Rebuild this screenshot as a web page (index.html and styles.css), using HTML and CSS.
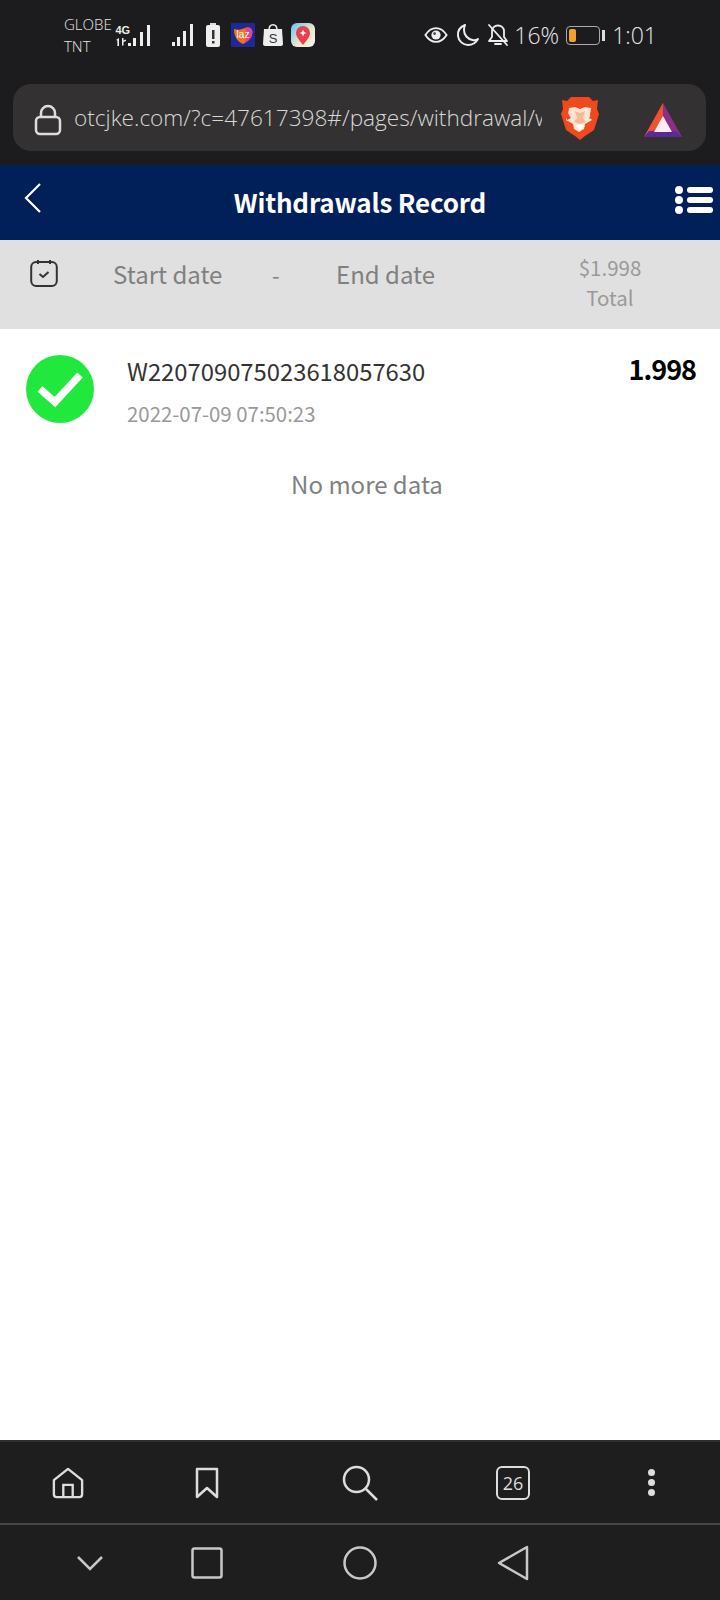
FILE: index.html
```html
<!DOCTYPE html>
<html lang="en">
<head>
    <meta charset="UTF-8">
    <meta name="viewport" content="width=device-width, initial-scale=1.0">
    <title>Withdrawals Record</title>
    <link rel="stylesheet" href="styles.css">
</head>
<body>
    <div class="chrome">
        <div class="status-bar">
            <div class="status-left">
                <div class="carrier">GLOBE<br>TNT</div>
                <svg width="36" height="24" viewBox="0 0 36 24">
                    <g fill="#eee">
                        <rect x="13" y="20" width="3" height="3"/>
                        <rect x="18" y="15" width="3" height="8"/>
                        <rect x="25" y="9" width="3" height="14"/>
                        <rect x="32" y="2" width="3" height="21"/>
                        <path d="M1 17l3-2v8H2.400v-5.500zM7 15h1.500v2.500l2.500-1v1.500l-2.500 1v3.500H7z"/>
                    </g>
                    <text x="0.500" y="11" class="net">4G</text>
                </svg>
                <svg class="ic-sig2" width="24" height="24" viewBox="0 0 24 24">
                    <g fill="#eee">
                        <rect x="1" y="19" width="3" height="4"/>
                        <rect x="6" y="14" width="3" height="9"/>
                        <rect x="12" y="8" width="3" height="15"/>
                        <rect x="19" y="1" width="3" height="22"/>
                    </g>
                </svg>
                <svg class="ic-batt" width="14" height="24" viewBox="0 0 14 24">
                    <rect x="4" y="0" width="6" height="3" fill="#ddd"/>
                    <rect x="0" y="2" width="14" height="22" rx="2" fill="#eee"/>
                    <rect x="6" y="7" width="2.500" height="9" fill="#333"/>
                    <rect x="6" y="18" width="2.500" height="2.500" fill="#333"/>
                </svg>
                <svg class="ic-laz" width="24" height="24" viewBox="0 0 24 24">
                    <rect width="24" height="24" fill="#1b2a94"/>
                    <path d="M3 6c3 1 6 1 8 0 3-1 6-2 8-1 2 1 3 3 2 7-1 4-5 7-9 9-5-2-9-7-9-15z" fill="#f5731f"/>
                    <path d="M14 5c2-.6 4-.6 5 0 2 1 3 3 2 7-1 4-5 7-9 9 3-3 5-8 2-16z" fill="#e8418e"/>
                    <text x="12" y="15" class="laz">laz</text>
                </svg>
                <svg class="ic-shop" width="20" height="22" viewBox="0 0 20 22">
                    <path d="M6 6c0-7 8-7 8 0" fill="none" stroke="#eee" stroke-width="1.500"/>
                    <path d="M1 5h18l1 15c0 1-1 2-2 2H2c-1 0-2-1-2-2z" fill="#eee"/>
                    <text x="10" y="19" class="shop">S</text>
                </svg>
                <svg class="ic-maps" width="24" height="24" viewBox="0 0 24 24">
                    <defs>
                        <linearGradient id="mapbg" x1="0" y1="0" x2="1" y2="1">
                            <stop offset="0" stop-color="#5cc6f2"/>
                            <stop offset="0.6" stop-color="#f3e9c8"/>
                            <stop offset="1" stop-color="#f4f4f4"/>
                        </linearGradient>
                    </defs>
                    <rect width="24" height="24" rx="6" fill="url(#mapbg)"/>
                    <path d="M12 22c-3-4-7-8-7-12a7 7 0 0 1 14 0c0 4-4 8-7 12z" fill="#e8404f"/>
                    <path d="M12 6.500l1 2.500 2.500 1-2.500 1-1 2.500-1-2.500-2.500-1 2.500-1z" fill="#fff"/>
                </svg>
            </div>
            <div class="status-right">
                <svg width="24" height="20" viewBox="0 0 26 20">
                    <path d="M1.500 10C5 4.500 9 2.500 13 2.500S21 4.500 24.500 10C21 15.500 17 17.500 13 17.500S5 15.500 1.500 10z" fill="none" stroke="#eee" stroke-width="2"/>
                    <circle cx="13" cy="10" r="5" fill="#eee"/>
                    <circle cx="11.500" cy="8.500" r="1.500" fill="#444"/>
                </svg>
                <svg class="ic-moon" width="24" height="24" viewBox="0 0 24 24">
                    <path d="M9 2C4 4 1.500 8 2 13c.6 5 5 9 10 9 4.500 0 8-2.500 10-6-1.500 1-3.500 1.500-5.500 1-5-1-8.500-5-8.500-10 0-2 .4-3.500 1-5z" fill="none" stroke="#eee" stroke-width="2" stroke-linejoin="round"/>
                </svg>
                <svg class="ic-bell" width="22" height="24" viewBox="0 0 22 24">
                    <g fill="none" stroke="#eee" stroke-width="1.800" stroke-linejoin="round" stroke-linecap="round">
                        <path d="M5 8c0-3 2.500-5.500 6-5.500S17 5 17 8v6l3 4H2l3-4z"/>
                        <path d="M8 21h6"/>
                        <path d="M2 2l18 20"/>
                    </g>
                </svg>
                <span class="pct">16%</span>
                <div class="battery"><div class="battery-fill"></div></div>
                <div class="battery-cap"></div>
                <span class="clock">1:01</span>
            </div>
        </div>

        <div class="url-bar">
            <svg class="lock" width="28" height="32" viewBox="0 0 28 32">
                <path d="M7 13V9a7 7 0 0 1 14 0v4" fill="none" stroke="#ddd" stroke-width="2.500"/>
                <rect x="2" y="13" width="24" height="17" rx="4" fill="none" stroke="#ddd" stroke-width="2.500"/>
            </svg>
            <div class="url-text">otcjke.com/?c=47617398#/pages/withdrawal/withdrawal</div>
            <svg class="brave" width="38" height="44" viewBox="0 0 38 44">
                <path d="M10 1h18l4 4 5-1-1 9 2 5-5 16-9 6-5 4-5-4-9-6L0 18l2-5-1-9 5 1z" fill="#f0491e"/>
                <path d="M8 12l6-1 5 2 5-2 6 1-1 7 2 5-7 4-1 5-5 3-5-3-1-5-7-4 2-5z" fill="#fbe4d4"/>
                <path d="M14 15l2 7-3 4 6 2 6-2-3-4 2-7-5 2z" fill="#f4a878" opacity="0.7"/>
                <path d="M14 30l5-2 5 2-5 4z" fill="#fff"/>
                <path d="M6 16l4 6-4 2zM32 16l-4 6 4 2z" fill="#f0491e"/>
            </svg>
            <svg class="bat-logo" width="40" height="36" viewBox="0 0 40 36">
                <path d="M20 1L39 35H1z" fill="#8b2f86"/>
                <path d="M20 1L1 35l19-12z" fill="#f0512e"/>
                <path d="M1 35h38l-6-6H6z" fill="#5a2a96"/>
                <path d="M20 14l9 16H11z" fill="#fbeef2"/>
            </svg>
        </div>
    </div>

    <div class="header">
        <svg class="back" width="20" height="32" viewBox="0 0 20 32">
            <path d="M17 2L3 16l14 14" fill="none" stroke="#fff" stroke-width="2.200"/>
        </svg>
        <h1 class="title">Withdrawals Record</h1>
        <div class="menu">
            <div class="menu-row"><i class="dot"></i><i class="bar"></i></div>
            <div class="menu-row"><i class="dot"></i><i class="bar"></i></div>
            <div class="menu-row"><i class="dot"></i><i class="bar"></i></div>
        </div>
    </div>

    <div class="filter">
        <svg class="cal" width="28" height="28" viewBox="0 0 28 28">
            <rect x="1.200" y="3" width="25.600" height="24" rx="5" fill="none" stroke="#333" stroke-width="2"/>
            <path d="M8 1v4M20 1v4" stroke="#333" stroke-width="2"/>
            <path d="M9.500 15l3.500 3 5.500-5" fill="none" stroke="#333" stroke-width="2"/>
        </svg>
        <span class="date date-start">Start date</span>
        <span class="date date-sep">-</span>
        <span class="date date-end">End date</span>
        <div class="total">
            <div>$1.998</div>
            <div>Total</div>
        </div>
    </div>

    <div class="content">
        <div class="record">
            <svg class="ok" width="68" height="68" viewBox="0 0 68 68">
                <circle cx="34" cy="34" r="34" fill="#21e83c"/>
                <path d="M14 34l15 13 25-27" fill="none" stroke="#fff" stroke-width="7.500"/>
            </svg>
            <div class="record-info">
                <div class="record-no">W220709075023618057630</div>
                <div class="record-time">2022-07-09 07:50:23</div>
            </div>
            <div class="record-amt">1.998</div>
        </div>
        <div class="no-more">No more data</div>
    </div>

    <div class="toolbar">
        <svg class="tool-home" width="32" height="32" viewBox="0 0 34 34">
            <path d="M2 14L17 2l15 12v15a3 3 0 0 1-3 3H5a3 3 0 0 1-3-3z" fill="none" stroke="#ddd" stroke-width="2.500" stroke-linejoin="round"/>
            <path d="M12 32V19h10v13" fill="none" stroke="#ddd" stroke-width="2.500"/>
        </svg>
        <svg width="24" height="32" viewBox="0 0 24 32">
            <path d="M2 2h20v28l-10-9-10 9z" fill="none" stroke="#ddd" stroke-width="2.500" stroke-linejoin="round"/>
        </svg>
        <svg width="36" height="36" viewBox="0 0 36 36">
            <circle cx="14.500" cy="14.500" r="12.500" fill="none" stroke="#ddd" stroke-width="2.500"/>
            <path d="M24 24l11 11" stroke="#ddd" stroke-width="2.500"/>
        </svg>
        <div class="tabs">26</div>
        <div class="more"><i></i><i></i><i></i></div>
    </div>
    <div class="nav-bar">
        <svg class="nav-down" width="28" height="16" viewBox="0 0 28 16">
            <path d="M2 2l12 12L26 2" fill="none" stroke="#c8c8c8" stroke-width="2.500"/>
        </svg>
        <svg width="32" height="32" viewBox="0 0 32 32">
            <rect x="1.500" y="1.500" width="29" height="29" rx="2" fill="none" stroke="#c8c8c8" stroke-width="2.500"/>
        </svg>
        <svg width="34" height="34" viewBox="0 0 34 34">
            <circle cx="17" cy="17" r="15.500" fill="none" stroke="#c8c8c8" stroke-width="2.500"/>
        </svg>
        <svg width="32" height="36" viewBox="0 0 32 36">
            <path d="M2 18L30 2v32z" fill="none" stroke="#c8c8c8" stroke-width="2.500" stroke-linejoin="round"/>
        </svg>
    </div>
</body>
</html>
```

FILE: styles.css
```css
* {
    box-sizing: border-box;
}

html, body {
    margin: 0;
    padding: 0;
}

body {
    width: 720px;
    height: 1600px;
    display: flex;
    flex-direction: column;
    overflow: hidden;
    background-color: #fff;
    font-family: "Noto Sans CJK SC", "Noto Sans", sans-serif;
}

svg {
    display: block;
    flex: none;
}

/* Status bar + address bar */
.chrome {
    height: 165px;
    background-color: #1c1c1e;
}

.status-bar {
    height: 84px;
    padding: 13px 63px 0 64px;
    display: flex;
    justify-content: space-between;
    align-items: flex-start;
    font-family: "Open Sans", sans-serif;
    font-weight: 300;
    color: #e6e6e6;
}

.status-left, .status-right {
    height: 44px;
    display: flex;
    align-items: center;
}

.carrier {
    width: 51px;
    font-size: 15px;
    line-height: 22px;
}

.net {
    font-family: "Liberation Sans", sans-serif;
    font-weight: 700;
    font-size: 11px;
    fill: #eee;
}

.laz {
    font-family: "Liberation Sans", sans-serif;
    font-size: 10px;
    text-anchor: middle;
    fill: #fff;
}

.shop {
    font-family: "Liberation Sans", sans-serif;
    font-size: 13px;
    text-anchor: middle;
    fill: #333;
}

.ic-sig2 {
    margin-left: 20px;
}

.ic-batt {
    margin-left: 11px;
}

.ic-laz {
    margin-left: 11px;
}

.ic-shop {
    margin-left: 8px;
}

.ic-maps {
    margin-left: 8px;
}

.ic-moon {
    margin-left: 8px;
}

.ic-bell {
    margin-left: 7px;
}

.pct {
    margin-left: 5px;
    font-size: 23px;
}

.battery {
    margin-left: 7px;
    width: 34px;
    height: 19px;
    padding: 2px;
    border: 1px solid #aaa;
    border-radius: 4px;
}

.battery-fill {
    width: 7px;
    height: 100%;
    border-radius: 2px;
    background-color: #f2a229;
}

.battery-cap {
    margin-left: 2px;
    width: 3px;
    height: 11px;
    background-color: #ddd;
}

.clock {
    margin-left: 7px;
    font-size: 23px;
}

.url-bar {
    margin: 0 14px 0 13px;
    height: 67px;
    padding-left: 21px;
    display: flex;
    align-items: center;
    border-radius: 18px;
    background-color: #333131;
}

.lock {
    margin-top: 4px;
}

.url-text {
    margin-left: 12px;
    width: 468px;
    overflow: hidden;
    white-space: nowrap;
    font-family: "Open Sans", sans-serif;
    font-weight: 300;
    font-size: 22.6px;
    color: #d8d8d8;
}

.brave {
    margin-left: 19px;
}

.bat-logo {
    margin-left: 44px;
    margin-top: 4px;
}

/* Page header */
.header {
    height: 75px;
    padding: 0 7px;
    display: grid;
    grid-template-columns: 1fr auto 1fr;
    align-items: center;
    background-color: #012059;
}

.back {
    margin-top: -10px;
    margin-left: 16px;
}

.title {
    margin: -2px 0 0;
    font-size: 26px;
    font-weight: 700;
    color: #fff;
    letter-spacing: -0.2px;
}

.menu {
    justify-self: end;
    display: flex;
    flex-direction: column;
    gap: 2px;
    margin-top: -5px;
}

.menu-row {
    display: flex;
    align-items: center;
    gap: 4px;
}

.dot {
    width: 8px;
    height: 8px;
    border-radius: 50%;
    background-color: #fff;
}

.bar {
    width: 26px;
    height: 6px;
    border-radius: 3px;
    background-color: #fff;
}

/* Date filter */
.filter {
    height: 89px;
    padding: 16px 0 0 30px;
    display: flex;
    align-items: flex-start;
    background-color: #e0e0e0;
}

.cal {
    margin-top: 3px;
}

.date {
    font-size: 24px;
    line-height: 36px;
    color: #808080;
}

.date-start {
    margin-left: 55px;
    width: 159px;
}

.date-sep {
    width: 64px;
    font-size: 22px;
}

.date-end {
    width: 139px;
}

.total {
    width: 100px;
    margin-left: 85px;
    margin-top: -4px;
    text-align: center;
    font-size: 20.5px;
    line-height: 30px;
    color: #999;
}

/* Record list */
.content {
    flex: 1;
}

.record {
    padding: 26px 24px 0 26px;
    display: flex;
    align-items: flex-start;
}

.record-info {
    flex: 1;
    margin-left: 33px;
}

.record-no {
    margin-top: -2px;
    font-size: 23.8px;
    line-height: 36px;
    color: #333;
}

.record-time {
    margin-top: 9px;
    font-size: 20.4px;
    line-height: 30px;
    color: #999;
}

.record-amt {
    margin-top: -4px;
    font-size: 27px;
    line-height: 36px;
    font-weight: 700;
    color: #000;
    letter-spacing: -1px;
}

.no-more {
    margin-top: 38px;
    padding-left: 14px;
    text-align: center;
    font-size: 24px;
    line-height: 36px;
    color: #808080;
}

/* Browser toolbar and system navigation share the same columns */
.toolbar, .nav-bar {
    display: grid;
    grid-template-columns: 137px 139px 168px 138px 138px;
    justify-items: center;
    align-items: center;
    background-color: #1e1e1e;
}

.toolbar {
    height: 83px;
    border-top: 2px solid #2f2f2f;
}

.tool-home {
    margin-right: 2px;
}

.tabs {
    width: 34px;
    height: 34px;
    border: 2.5px solid #ddd;
    border-radius: 6px;
    display: flex;
    align-items: center;
    justify-content: center;
    font-family: "Open Sans", sans-serif;
    font-size: 18px;
    color: #ddd;
}

.more {
    display: flex;
    flex-direction: column;
    gap: 3px;
}

.more i {
    width: 7px;
    height: 7px;
    border-radius: 50%;
    background-color: #ddd;
}

.nav-bar {
    height: 77px;
    border-top: 2px solid #474747;
}

.nav-down {
    margin-left: 43px;
}
```
